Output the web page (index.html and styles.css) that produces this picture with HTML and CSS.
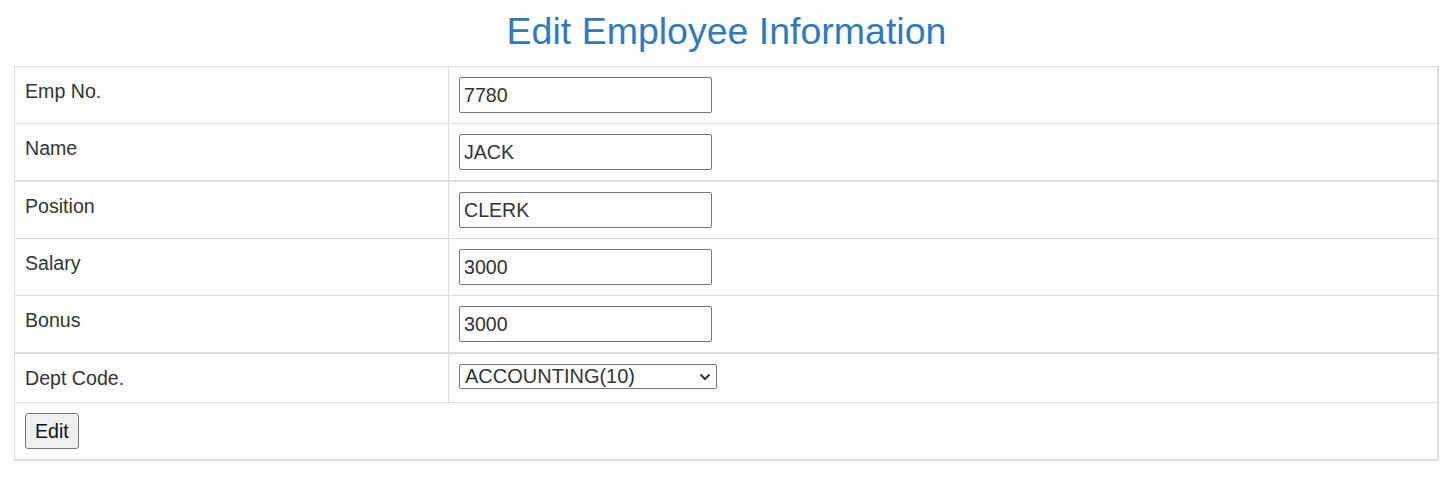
FILE: index.html
```html
<!DOCTYPE html>
<html lang="en">
<head>
<meta charset="utf-8">
<title>Edit Employee Information</title>
<link rel="stylesheet" href="styles.css">
</head>
<body>
<div class="page">
  <h2 class="title">Edit Employee Information</h2>
  <form class="emp-form">
    <table class="emp-table">
      <tbody>
        <tr>
          <td class="label">Emp No.</td>
          <td class="field"><input class="text-input" type="text" value="7780"></td>
        </tr>
        <tr class="before-thick">
          <td class="label">Name</td>
          <td class="field"><input class="text-input" type="text" value="JACK"></td>
        </tr>
        <tr>
          <td class="label">Position</td>
          <td class="field"><input class="text-input" type="text" value="CLERK"></td>
        </tr>
        <tr>
          <td class="label">Salary</td>
          <td class="field"><input class="text-input" type="text" value="3000"></td>
        </tr>
        <tr class="before-thick">
          <td class="label">Bonus</td>
          <td class="field"><input class="text-input" type="text" value="3000"></td>
        </tr>
        <tr>
          <td class="label">Dept Code.</td>
          <td class="field">
            <span class="select-wrap">
              <select class="select-input">
                <option selected>ACCOUNTING(10)</option>
                <option>RESEARCH(20)</option>
                <option>SALES(30)</option>
                <option>OPERATIONS(40)</option>
              </select>
              <svg class="chevron" width="12" height="8" viewBox="0 0 12 8" aria-hidden="true"><path d="M1.5 1.5 L6 6 L10.5 1.5" fill="none" stroke="#333" stroke-width="2"/></svg>
            </span>
          </td>
        </tr>
        <tr class="last">
          <td class="action" colspan="2"><button class="btn" type="button">Edit</button></td>
        </tr>
      </tbody>
    </table>
  </form>
</div>
</body>
</html>
```

FILE: styles.css
```css
html, body {
  margin: 0;
  padding: 0;
  background: #fff;
}

body {
  font-family: "Liberation Sans", Arial, Helvetica, sans-serif;
  font-size: 19.6px;
  color: #333;
}

.page {
  padding: 0 15px 0 14px;
}

.title {
  margin: 11px 0 14px;
  font-size: 37.5px;
  line-height: 41px;
  font-weight: 400;
  color: #337ab7;
  text-align: center;
}

.emp-form {
  margin: 0;
}

.emp-table {
  width: 100%;
  box-sizing: border-box;
  table-layout: fixed;
  border-collapse: separate;
  border-spacing: 0;
  border-top: 1px solid #ddd;
  border-left: 1px solid #ddd;
  border-right: 2px solid #ddd;
  border-bottom: 2px solid #ddd;
}

.emp-table td {
  padding: 10px;
  vertical-align: top;
  line-height: 28px;
  border-bottom: 1px solid #ddd;
}

.emp-table tr.before-thick td {
  border-bottom-width: 2px;
}

.emp-table tr.last td {
  border-bottom: none;
}

.emp-table td.label {
  width: 434px;
  box-sizing: border-box;
  border-right: 1px solid #ddd;
}

.text-input {
  display: block;
  box-sizing: border-box;
  width: 253px;
  height: 36px;
  margin: 0;
  padding: 0 4px;
  border: 1px solid #767676;
  border-radius: 2px;
  font-family: "Liberation Sans", Arial, Helvetica, sans-serif;
  font-size: 19.6px;
  color: #333;
  background: #fff;
}

.select-wrap {
  position: relative;
  display: inline-block;
  vertical-align: top;
  height: 25px;
}

.select-input {
  display: block;
  box-sizing: border-box;
  width: 258px;
  height: 25px;
  margin: 0;
  padding: 0 24px 0 5px;
  border: 1px solid #767676;
  border-radius: 2px;
  font-family: "Liberation Sans", Arial, Helvetica, sans-serif;
  font-size: 20px;
  line-height: 23px;
  color: #333;
  background: #fff;
  appearance: none;
  -webkit-appearance: none;
}

.chevron {
  position: absolute;
  right: 6px;
  top: 9px;
  pointer-events: none;
}

.btn {
  display: block;
  box-sizing: border-box;
  height: 36px;
  margin: 0;
  padding: 0 9px;
  border: 1px solid #767676;
  border-radius: 3px;
  background: #efefef;
  font-family: "Liberation Sans", Arial, Helvetica, sans-serif;
  font-size: 19.6px;
  color: #111;
  cursor: pointer;
}
```
